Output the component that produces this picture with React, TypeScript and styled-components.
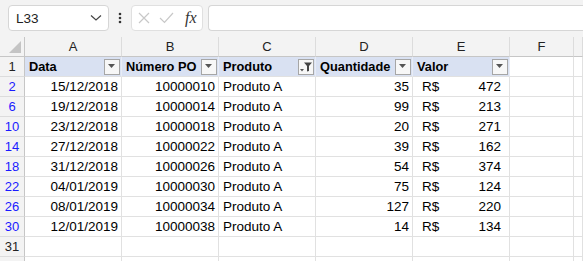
import styled, { createGlobalStyle } from 'styled-components';

const GlobalStyle = createGlobalStyle`
  html, body {
    margin: 0;
    padding: 0;
    background: #ffffff;
    overflow: hidden;
  }
  body {
    font-family: "Liberation Sans", Arial, sans-serif;
  }
`;

const COLS = ['A', 'B', 'C', 'D', 'E', 'F', ''];

const rows = [
    { n: 2, data: '15/12/2018', po: '10000010', qtd: 35, valor: 472 },
    { n: 6, data: '19/12/2018', po: '10000014', qtd: 99, valor: 213 },
    { n: 10, data: '23/12/2018', po: '10000018', qtd: 20, valor: 271 },
    { n: 14, data: '27/12/2018', po: '10000022', qtd: 39, valor: 162 },
    { n: 18, data: '31/12/2018', po: '10000026', qtd: 54, valor: 374 },
    { n: 22, data: '04/01/2019', po: '10000030', qtd: 75, valor: 124 },
    { n: 26, data: '08/01/2019', po: '10000034', qtd: 127, valor: 220 },
    { n: 30, data: '12/01/2019', po: '10000038', qtd: 14, valor: 134 },
];

const Page = styled.div`
    width: 583px;
    height: 261px;
    overflow: hidden;
    background: #ffffff;
`;

const TopBar = styled.div`
    height: 37px;
    background: #f3f3f3;
    display: flex;
    align-items: center;
    padding: 0 0 1px 8px;
    box-sizing: border-box;
`;

const NameBox = styled.div`
    width: 101px;
    height: 26px;
    box-sizing: border-box;
    background: #ffffff;
    border: 1px solid #d6d6d6;
    border-radius: 4px;
    display: flex;
    align-items: center;
    justify-content: space-between;
    padding: 0 6px 0 7px;
    font-size: 13.5px;
    color: #222;
`;

const Dots = styled.div`
    width: 22px;
    display: flex;
    justify-content: center;
`;

const FormulaTools = styled.div`
    width: 72px;
    height: 26px;
    box-sizing: border-box;
    background: #ffffff;
    border: 1px solid #e0e0e0;
    border-radius: 4px;
    display: flex;
    align-items: center;
    gap: 9px;
    padding: 0 0 0 6px;
`;

const Fx = styled.span`
    font-family: "Liberation Serif", "Times New Roman", serif;
    font-style: italic;
    font-size: 16px;
    color: #333;
    margin-left: 2px;
`;

const FormulaInput = styled.div`
    flex: 1;
    height: 26px;
    margin-left: 5px;
    box-sizing: border-box;
    background: #ffffff;
    border: 1px solid #d6d6d6;
    border-right: none;
    border-radius: 4px 0 0 4px;
`;

const Sheet = styled.div`
    display: grid;
    grid-template-columns: 25px 97px 97px 97px 97px 97px 64px 1fr;
    grid-auto-rows: 20px;
    font-size: 13.5px;
    color: #000;
`;

const Corner = styled.div`
    position: relative;
    background: #f3f3f3;
    border-right: 1px solid #c6c6c6;
    border-bottom: 1px solid #c6c6c6;
    box-sizing: border-box;
`;

const CornerTriangle = styled.div`
    position: absolute;
    right: 3px;
    bottom: 3px;
    width: 0;
    height: 0;
    border-left: 12px solid transparent;
    border-bottom: 12px solid #c4c4c4;
`;

const ColHead = styled.div`
    background: #f3f3f3;
    border-right: 1px solid #dcdcdc;
    border-bottom: 1px solid #c6c6c6;
    box-sizing: border-box;
    display: flex;
    align-items: center;
    justify-content: center;
    font-size: 13px;
    color: #222;
`;

const RowHead = styled.div<{ $filtered?: boolean }>`
    background: #f3f3f3;
    border-right: 1px solid #c6c6c6;
    border-bottom: 1px solid #dcdcdc;
    box-sizing: border-box;
    display: flex;
    align-items: center;
    justify-content: center;
    font-size: 13px;
    color: ${(p) => (p.$filtered ? '#1a1aff' : '#222')};
`;

const Cell = styled.div<{ $align?: 'left' | 'right'; $head?: boolean }>`
    background: ${(p) => (p.$head ? '#d9e1f2' : '#ffffff')};
    border-right: 1px solid ${(p) => (p.$head ? '#e8ecf5' : '#e1e1e1')};
    border-bottom: 1px solid #e1e1e1;
    box-sizing: border-box;
    display: flex;
    align-items: center;
    justify-content: ${(p) => (p.$align === 'right' ? 'flex-end' : 'space-between')};
    padding: 0 3px 0 4px;
    font-weight: ${(p) => (p.$head ? 700 : 400)};
    font-size: ${(p) => (p.$head ? '12.8px' : '13.5px')};
    white-space: nowrap;
    overflow: hidden;
`;

const Accounting = styled(Cell)`
    padding: 0 8px 0 9px;
`;

const FilterButton = styled.div`
    width: 16px;
    height: 16px;
    box-sizing: border-box;
    border: 1px solid #a6a6a6;
    background: #f7f7f7;
    display: flex;
    align-items: center;
    justify-content: center;
    margin-right: -2px;
    flex-shrink: 0;
`;

function Arrow() {
    return (
        <svg width="8" height="5" viewBox="0 0 8 5">
            <path d="M0 0 H7 L3.5 4 Z" fill="#555" />
        </svg>
    );
}

function FunnelIcon() {
    return (
        <svg width="14" height="12" viewBox="0 0 14 12">
            <path d="M1 8 H5 L3 10.5 Z" fill="#555" />
            <path d="M5 1.5 H13 L10 5 V10 L8 10.5 V5 Z" fill="#444" />
        </svg>
    );
}

function HeaderCell(props: { label: string; filtered?: boolean }) {
    return (
        <Cell $head>
            <span>{props.label}</span>
            <FilterButton>{props.filtered ? <FunnelIcon /> : <Arrow />}</FilterButton>
        </Cell>
    );
}

export default function App() {
    return (
        <Page>
            <GlobalStyle />
            <TopBar>
                <NameBox>
                    <span>L33</span>
                    <svg width="12" height="8" viewBox="0 0 12 8">
                        <path d="M1 1.5 L6 6 L11 1.5" stroke="#444" strokeWidth="1.2" fill="none" />
                    </svg>
                </NameBox>
                <Dots>
                    <svg width="4" height="12" viewBox="0 0 4 12">
                        <circle cx="2" cy="2" r="1.3" fill="#333" />
                        <circle cx="2" cy="6" r="1.3" fill="#333" />
                        <circle cx="2" cy="10" r="1.3" fill="#333" />
                    </svg>
                </Dots>
                <FormulaTools>
                    <svg width="12" height="12" viewBox="0 0 12 12">
                        <path d="M1 1 L11 11 M11 1 L1 11" stroke="#c8c8c8" strokeWidth="1.2" />
                    </svg>
                    <svg width="15" height="12" viewBox="0 0 15 12">
                        <path d="M1 6 L5.5 10.5 L14 1" stroke="#c8c8c8" strokeWidth="1.2" fill="none" />
                    </svg>
                    <Fx>fx</Fx>
                </FormulaTools>
                <FormulaInput />
            </TopBar>
            <Sheet>
                <Corner>
                    <CornerTriangle />
                </Corner>
                {COLS.map((c, i) => (
                    <ColHead key={i}>{c}</ColHead>
                ))}

                <RowHead>1</RowHead>
                <HeaderCell label="Data" />
                <HeaderCell label="Número PO" />
                <HeaderCell label="Produto" filtered />
                <HeaderCell label="Quantidade" />
                <HeaderCell label="Valor" />
                <Cell />
                <Cell />

                {rows.map((r) => (
                    <Row key={r.n} {...r} />
                ))}

                <RowHead>31</RowHead>
                {COLS.map((_, i) => (
                    <Cell key={i} />
                ))}
                <RowHead />
                {COLS.map((_, i) => (
                    <Cell key={i} />
                ))}
            </Sheet>
        </Page>
    );
}

function Row(r: { n: number; data: string; po: string; qtd: number; valor: number }) {
    return (
        <>
            <RowHead $filtered>{r.n}</RowHead>
            <Cell $align="right">{r.data}</Cell>
            <Cell $align="right">{r.po}</Cell>
            <Cell>Produto A</Cell>
            <Cell $align="right">{r.qtd}</Cell>
            <Accounting>
                <span>R$</span>
                <span>{r.valor}</span>
            </Accounting>
            <Cell />
            <Cell />
        </>
    );
}
